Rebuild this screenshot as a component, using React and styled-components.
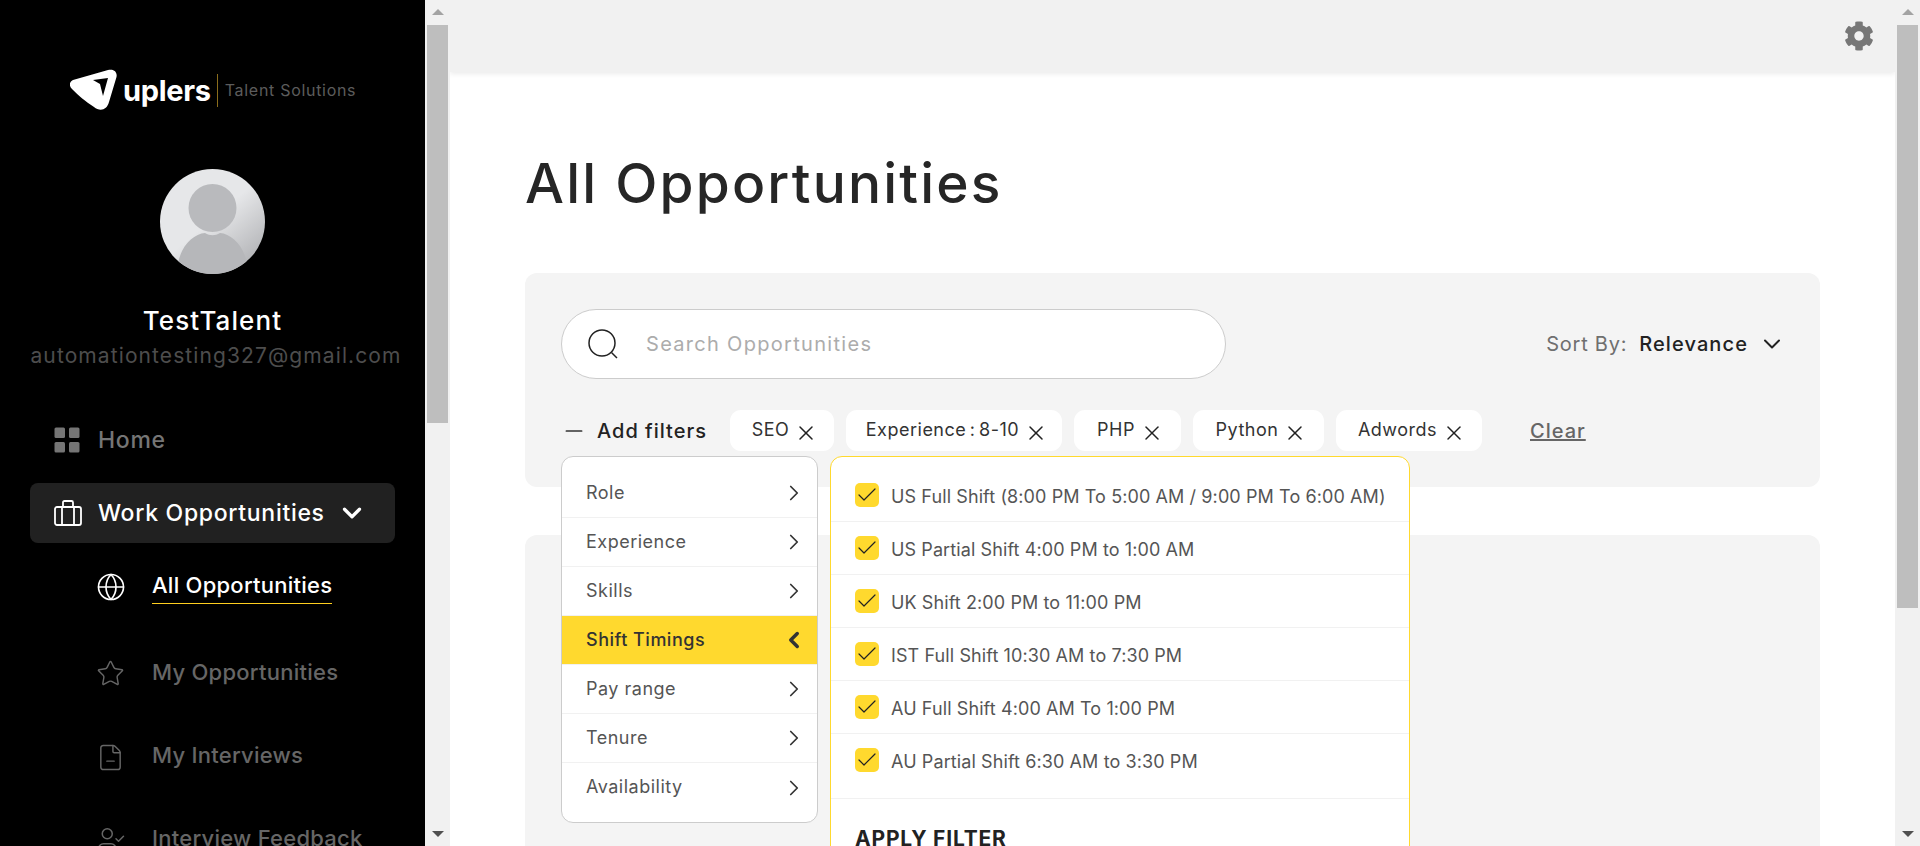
import React from 'react';
import styled, { createGlobalStyle } from 'styled-components';
import { X, Minus, ChevronRight, ChevronLeft, ChevronDown, Check, Globe, Star, FileMinus, UserCheck } from 'lucide-react';
import { FaCog } from 'react-icons/fa';

const GlobalStyle = createGlobalStyle`
  html, body {
    margin: 0;
    padding: 0;
    height: 100%;
    overflow: hidden;
    background: #fff;
    font-family: Inter, "Open Sans", sans-serif;
  }
  * { box-sizing: border-box; }
`;

const chips = [
  { label: 'SEO', width: 104 },
  { label: 'Experience : 8-10', width: 216 },
  { label: 'PHP', width: 107 },
  { label: 'Python', width: 131 },
  { label: 'Adwords', width: 146 },
];

const menuItems = ['Role', 'Experience', 'Skills', 'Shift Timings', 'Pay range', 'Tenure', 'Availability'];

const shifts = [
  'US Full Shift (8:00 PM To 5:00 AM / 9:00 PM To 6:00 AM)',
  'US Partial Shift 4:00 PM to 1:00 AM',
  'UK Shift 2:00 PM to 11:00 PM',
  'IST Full Shift 10:30 AM to 7:30 PM',
  'AU Full Shift 4:00 AM To 1:00 PM',
  'AU Partial Shift 6:30 AM to 3:30 PM',
];

const LogoMark = () => (
  <svg width="48" height="42" viewBox="0 0 48 42">
    <path
      d="M3 11 L38 1 C44 -0.5 47.5 3 46.5 8 L39 33 C37 41 30 43 24 38 C15 32 9 27 2 20 C-1 17 -1 13 3 11 Z"
      fill="#fff"
    />
    <path d="M23 11 L38 9 L33 27 L30 15 Z" fill="#000" />
  </svg>
);

const Avatar = () => (
  <svg width="105" height="105" viewBox="0 0 105 105">
    <defs>
      <linearGradient id="avatarBg" x1="0.25" y1="0.2" x2="0.85" y2="0.9">
        <stop offset="0.4" stopColor="#e6e7e9" />
        <stop offset="1" stopColor="#b4b5b8" />
      </linearGradient>
      <clipPath id="avatarClip">
        <circle cx="52.5" cy="52.5" r="52.5" />
      </clipPath>
    </defs>
    <circle cx="52.5" cy="52.5" r="52.5" fill="url(#avatarBg)" />
    <circle cx="52.5" cy="39" r="24" fill="#b9babd" />
    <path d="M17 105 C17 80 32 65 45 64 C50 67 55 67 60 64 C73 65 88 80 88 105 Z" fill="#b6b7ba" clipPath="url(#avatarClip)" />
  </svg>
);

const HomeIcon = () => (
  <svg width="26" height="26" viewBox="0 0 26 26" fill="#757575">
    <rect x="0.5" y="0.5" width="10.5" height="10.5" rx="1.5" />
    <rect x="15" y="0.5" width="10.5" height="10.5" rx="1.5" />
    <rect x="0.5" y="15" width="10.5" height="10.5" rx="1.5" />
    <rect x="15" y="15" width="10.5" height="10.5" rx="1.5" />
  </svg>
);

const BriefcaseIcon = () => (
  <svg width="28" height="26" viewBox="0 0 28 26" fill="none" stroke="#fff" strokeWidth="1.8">
    <rect x="1" y="7" width="26" height="18" rx="2" />
    <path d="M8 25 V7 M20 25 V7 M9 7 V2.5 Q9 1 10.5 1 H17.5 Q19 1 19 2.5 V7" />
  </svg>
);

const SearchIcon = () => (
  <svg width="30" height="30" viewBox="0 0 30 30" fill="none" stroke="#222" strokeWidth="1.5">
    <circle cx="14" cy="14" r="13" />
    <path d="M23.5 23.5 L29 29" />
  </svg>
);

export default function App() {
  return (
    <Page>
      <GlobalStyle />
      <Sidebar>
        <Logo>
          <LogoMark />
          <LogoWord>uplers</LogoWord>
          <LogoDivider />
          <LogoTag>Talent Solutions</LogoTag>
        </Logo>
        <AvatarWrap>
          <Avatar />
        </AvatarWrap>
        <UserName>TestTalent</UserName>
        <UserEmail>automationtesting327@gmail.com</UserEmail>
        <Nav>
          <NavItem>
            <NavIcon><HomeIcon /></NavIcon>
            <NavLabel>Home</NavLabel>
          </NavItem>
          <NavItem $active>
            <NavIcon><BriefcaseIcon /></NavIcon>
            <NavLabel $active>Work Opportunities</NavLabel>
            <ChevronDown size={30} strokeWidth={2.6} color="#fff" />
          </NavItem>
          <SubItem $height={88} $active>
            <SubIcon><Globe size={30} strokeWidth={1.3} color="#fff" /></SubIcon>
            <SubLabel $active>All Opportunities</SubLabel>
          </SubItem>
          <SubItem $height={85}>
            <SubIcon><Star size={29} strokeWidth={1.2} color="#666" /></SubIcon>
            <SubLabel>My Opportunities</SubLabel>
          </SubItem>
          <SubItem $height={82}>
            <SubIcon><FileMinus size={29} strokeWidth={1.2} color="#666" /></SubIcon>
            <SubLabel>My Interviews</SubLabel>
          </SubItem>
          <SubItem $height={84}>
            <SubIcon><UserCheck size={30} strokeWidth={1.2} color="#666" /></SubIcon>
            <SubLabel>Interview Feedback</SubLabel>
          </SubItem>
        </Nav>
      </Sidebar>
      <Scrollbar $thumb={398} />
      <Main>
        <TopBar>
          <FaCog size={30} color="#777" />
        </TopBar>
        <Content>
          <Title>All Opportunities</Title>
          <FilterCard>
            <SearchRow>
              <SearchBox>
                <SearchIcon />
                <Placeholder>Search Opportunities</Placeholder>
              </SearchBox>
              <Sort>
                <SortLabel>Sort By:</SortLabel>
                <SortValue>Relevance</SortValue>
                <ChevronDown size={28} strokeWidth={1.7} color="#222" />
              </Sort>
            </SearchRow>
            <FilterRow>
              <AddFilters>
                <Minus size={26} strokeWidth={1.6} color="#333" />
                <AddLabel>Add filters</AddLabel>
              </AddFilters>
              <Chips>
                {chips.map(chip => (
                  <Chip key={chip.label} $width={chip.width}>
                    <ChipText>{chip.label}</ChipText>
                    <ChipClose><X size={24} strokeWidth={1.5} color="#222" /></ChipClose>
                  </Chip>
                ))}
              </Chips>
              <ClearLink>Clear</ClearLink>
            </FilterRow>
            <Dropdown>
              <Menu>
                {menuItems.map(item => {
                  const active = item === 'Shift Timings';
                  return (
                    <MenuRow key={item} $active={active}>
                      <MenuLabel $active={active}>{item}</MenuLabel>
                      {active
                        ? <ChevronLeft size={26} strokeWidth={3.2} color="#333" />
                        : <ChevronRight size={26} strokeWidth={1.6} color="#333" />}
                    </MenuRow>
                  );
                })}
              </Menu>
              <Panel>
                {shifts.map(shift => (
                  <ShiftRow key={shift}>
                    <CheckBox><Check size={24} strokeWidth={1.2} color="#222" /></CheckBox>
                    <ShiftLabel>{shift}</ShiftLabel>
                  </ShiftRow>
                ))}
                <ApplyRow>
                  <ApplyButton>APPLY FILTER</ApplyButton>
                </ApplyRow>
              </Panel>
            </Dropdown>
          </FilterCard>
          <ResultsCard />
        </Content>
      </Main>
      <Scrollbar $thumb={583} />
    </Page>
  );
}

function Scrollbar({ $thumb }) {
  return (
    <Track>
      <ArrowUp />
      <Thumb $height={$thumb} />
      <ArrowDown />
    </Track>
  );
}

const Page = styled.div`
  display: flex;
  width: 1920px;
  height: 846px;
  overflow: hidden;
`;

const Sidebar = styled.aside`
  width: 425px;
  flex: none;
  height: 100%;
  background: #000;
  padding-top: 69px;
  overflow: hidden;
  display: flex;
  flex-direction: column;
`;

const Logo = styled.div`
  display: flex;
  align-items: center;
  height: 42px;
  padding-left: 70px;
`;

const LogoWord = styled.span`
  margin-left: 5px;
  font-size: 29px;
  font-weight: 700;
  letter-spacing: -0.3px;
  color: #fff;
`;

const LogoDivider = styled.span`
  width: 1px;
  height: 33px;
  margin: 0 7px 0 6px;
  background: #8a6d1c;
`;

const LogoTag = styled.span`
  font-size: 16px;
  color: #5c5c5c;
  letter-spacing: 0.7px;
`;

const AvatarWrap = styled.div`
  display: flex;
  justify-content: center;
  margin-top: 58px;
`;

const UserName = styled.div`
  margin-top: 31px;
  text-align: center;
  font-size: 26px;
  font-weight: 500;
  line-height: 32px;
  letter-spacing: 1.1px;
  color: #fff;
`;

const UserEmail = styled.div`
  margin-top: 5px;
  padding-left: 7px;
  text-align: center;
  font-size: 21px;
  line-height: 28px;
  color: #4d4d4d;
  letter-spacing: 1.1px;
`;

const Nav = styled.nav`
  margin-top: 40px;
  padding: 0 30px;
  display: flex;
  flex-direction: column;
`;

const NavItem = styled.div`
  display: flex;
  align-items: center;
  height: 60px;
  margin-bottom: 13px;
  padding-left: 24px;
  border-radius: 8px;
  background: ${props => (props.$active ? '#212121' : 'transparent')};
`;

const NavIcon = styled.span`
  width: 44px;
  flex: none;
  display: flex;
`;

const NavLabel = styled.span`
  font-size: 23px;
  font-weight: 500;
  letter-spacing: 0.7px;
  color: ${props => (props.$active ? '#fff' : '#757575')};
  margin-right: 12px;
`;

const SubItem = styled.div`
  display: flex;
  align-items: center;
  height: ${props => props.$height}px;
  margin-top: ${props => (props.$active ? '-13px' : '0')};
  padding-left: 66px;
`;

const SubIcon = styled.span`
  width: 56px;
  flex: none;
  display: flex;
`;

const SubLabel = styled.span`
  font-size: 22px;
  font-weight: 500;
  line-height: 30px;
  padding-bottom: 3px;
  letter-spacing: 0.25px;
  white-space: nowrap;
  color: ${props => (props.$active ? '#fff' : '#666')};
  border-bottom: 1px solid ${props => (props.$active ? '#ffcf1f' : 'transparent')};
`;

const Track = styled.div`
  width: 25px;
  flex: none;
  height: 100%;
  background: #f1f1f1;
  display: flex;
  flex-direction: column;
  align-items: center;
  padding-top: 9px;
`;

const ArrowUp = styled.span`
  width: 0;
  height: 0;
  border-left: 6px solid transparent;
  border-right: 6px solid transparent;
  border-bottom: 6px solid #a3a3a3;
`;

const ArrowDown = styled.span`
  width: 0;
  height: 0;
  margin-top: auto;
  margin-bottom: 9px;
  border-left: 6px solid transparent;
  border-right: 6px solid transparent;
  border-top: 6px solid #505050;
`;

const Thumb = styled.div`
  width: 21px;
  height: ${props => props.$height}px;
  margin-top: 10px;
  background: #bebebe;
`;

const Main = styled.main`
  flex: 1;
  min-width: 0;
  height: 100%;
  overflow: hidden;
  display: flex;
  flex-direction: column;
  background: #fff;
`;

const TopBar = styled.header`
  height: 72px;
  flex: none;
  display: flex;
  align-items: center;
  justify-content: flex-end;
  padding-right: 21px;
  background: #f1f1f1;
  box-shadow: 0 2px 5px rgba(0, 0, 0, 0.08);
`;

const Content = styled.div`
  padding: 0 75px;
`;

const Title = styled.h1`
  margin: 76px 0 0;
  height: 125px;
  font-size: 55px;
  line-height: 70px;
  font-weight: 500;
  color: #262626;
  letter-spacing: 2.2px;
`;

const FilterCard = styled.section`
  position: relative;
  height: 214px;
  padding: 36px 36px 0;
  border-radius: 12px;
  background: #f4f4f4;
`;

const SearchRow = styled.div`
  display: flex;
  align-items: center;
  justify-content: space-between;
`;

const SearchBox = styled.div`
  width: 665px;
  height: 70px;
  display: flex;
  align-items: center;
  gap: 28px;
  padding-left: 26px;
  border: 1px solid #ccc;
  border-radius: 35px;
  background: #fff;
`;

const Placeholder = styled.span`
  font-size: 20px;
  color: #acacac;
  letter-spacing: 1.3px;
`;

const Sort = styled.div`
  display: flex;
  align-items: center;
  margin-right: -2px;
`;

const SortLabel = styled.span`
  font-size: 20px;
  color: #6f6f6f;
  letter-spacing: 0.75px;
  margin-right: 12px;
`;

const SortValue = styled.span`
  font-size: 20px;
  color: #222;
  font-weight: 500;
  letter-spacing: 1.1px;
  margin-right: 10px;
`;

const FilterRow = styled.div`
  display: flex;
  align-items: center;
  margin-top: 31px;
  height: 41px;
`;

const AddFilters = styled.div`
  display: flex;
  align-items: center;
  width: 169px;
  gap: 10px;
`;

const AddLabel = styled.span`
  font-size: 20px;
  font-weight: 500;
  letter-spacing: 1px;
  color: #222;
`;

const Chips = styled.div`
  display: flex;
  gap: 12px;
`;

const Chip = styled.div`
  width: ${props => props.$width}px;
  height: 41px;
  display: flex;
  align-items: center;
  justify-content: center;
  gap: 5px;
  padding-left: 6px;
  border-radius: 11px;
  background: #fff;
`;

const ChipText = styled.span`
  font-size: 18px;
  color: #333;
  letter-spacing: 0.5px;
  word-spacing: -2px;
  white-space: nowrap;
  margin-top: -2px;
`;

const ChipClose = styled.span`
  display: flex;
  margin-top: 4px;
`;

const ClearLink = styled.a`
  margin-left: 48px;
  font-size: 20px;
  font-weight: 500;
  letter-spacing: 1px;
  color: #666;
  text-decoration: underline;
`;

const Dropdown = styled.div`
  position: absolute;
  left: 36px;
  top: 183px;
  display: flex;
  align-items: flex-start;
  gap: 12px;
  z-index: 5;
`;

const Menu = styled.div`
  width: 257px;
  height: 367px;
  padding: 12px 0;
  border: 1px solid #ccc;
  border-radius: 12px;
  background: #fff;
`;

const MenuRow = styled.div`
  height: 49px;
  display: flex;
  align-items: center;
  justify-content: space-between;
  padding: 0 10px 0 24px;
  border-bottom: 1px solid #f1f1f1;
  background: ${props => (props.$active ? '#ffd92e' : 'transparent')};

  &:last-child {
    border-bottom: none;
  }
`;

const MenuLabel = styled.span`
  font-size: 18px;
  font-weight: ${props => (props.$active ? 500 : 400)};
  color: ${props => (props.$active ? '#333' : '#555')};
  letter-spacing: 0.5px;
  margin-top: -2px;
`;

const Panel = styled.div`
  width: 580px;
  padding-top: 12px;
  border: 1px solid #ffd92e;
  border-radius: 12px;
  background: #fff;
`;

const ShiftRow = styled.div`
  height: 53px;
  display: flex;
  align-items: center;
  gap: 12px;
  padding-left: 24px;
  border-bottom: 1px solid #f1f1f1;

  &:nth-child(6) {
    height: 65px;
    padding-bottom: 12px;
  }
`;

const CheckBox = styled.span`
  width: 24px;
  height: 24px;
  flex: none;
  display: flex;
  align-items: center;
  justify-content: center;
  border-radius: 5px;
  background: #ffd92e;
`;

const ShiftLabel = styled.span`
  font-size: 18px;
  color: #555;
  letter-spacing: 0.1px;
  white-space: nowrap;
  margin-top: 2px;
`;

const ApplyRow = styled.div`
  padding: 27px 24px 30px;
`;

const ApplyButton = styled.span`
  font-size: 21px;
  font-weight: 700;
  letter-spacing: 0.8px;
  color: #222;
`;

const ResultsCard = styled.section`
  height: 400px;
  margin-top: 48px;
  border-radius: 12px;
  background: #f4f4f4;
`;
